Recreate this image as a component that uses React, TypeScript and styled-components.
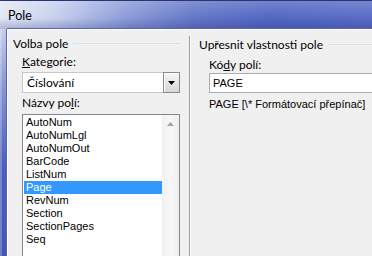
import React from 'react'
import styled, { createGlobalStyle } from 'styled-components'

const GlobalStyle = createGlobalStyle`
  html, body {
    margin: 0;
    padding: 0;
    background: #f0f0f0;
  }
`

const uiFont = `Lato, "Noto Sans", sans-serif`
const listFont = `"Liberation Sans", Arial, sans-serif`

const Window = styled.div`
  width: 372px;
  height: 256px;
  overflow: hidden;
  display: flex;
  flex-direction: column;
  background: #4f60bb;
`

const TitleBar = styled.div`
  height: 29px;
  flex: none;
  display: flex;
  align-items: center;
  padding-left: 8px;
  box-sizing: border-box;
  border-top: 1px solid #2a3470;
  background:
    linear-gradient(180deg, rgba(255, 255, 255, 0.18) 0%, rgba(255, 255, 255, 0) 60%, rgba(20, 30, 110, 0.25) 100%),
    linear-gradient(90deg, #e3e8f5 0%, #c9d3ee 14%, #8b9bd8 34%, #6477c8 52%, #5467c2 72%, #5a6cc6 100%);
  font-family: ${uiFont};
  font-size: 12.5px;
  color: #000;
`

const Frame = styled.div`
  flex: 1;
  display: flex;
  min-height: 0;
`

const Edge = styled.div`
  width: 7px;
  flex: none;
  background: linear-gradient(180deg, #c4cdec 0%, #8796d6 25%, #4d5fbc 60%, #4255b4 100%);
  box-shadow: inset 2px 0 0 rgba(255, 255, 255, 0.25);
`

const Client = styled.div`
  flex: 1;
  display: flex;
  padding-top: 6px;
  background: #f0f0f0;
  border-top: 1px solid #fdfdfd;
  border-left: 1px solid #fdfdfd;
  box-shadow: 0 -1px 0 #5a68a8, -1px 0 0 #5a68a8;
  font-family: ${uiFont};
  font-size: 12px;
  color: #000;
`

const Column = styled.div<{ $pl: number; $pr: number; $grow?: boolean }>`
  display: flex;
  flex-direction: column;
  padding-left: ${({ $pl }) => $pl}px;
  padding-right: ${({ $pr }) => $pr}px;
  ${({ $grow }) => ($grow ? 'flex: 1; min-width: 0;' : 'width: 181px; box-sizing: border-box; flex: none;')}
`

const Divider = styled.div`
  width: 1px;
  flex: none;
  background: #a0a0a0;
  border-right: 1px solid #ffffff;
`

const GroupHeader = styled.div`
  display: flex;
  align-items: center;
  gap: 5px;
  height: 16px;
  white-space: nowrap;
`

const HeaderLine = styled.div`
  flex: 1;
  height: 1px;
  background: #d5dfe5;
`

const Fields = styled.div<{ $indent: number }>`
  display: flex;
  flex-direction: column;
  padding-left: ${({ $indent }) => $indent}px;
`

const Label = styled.div<{ $mt: number }>`
  margin-top: ${({ $mt }) => $mt}px;
  height: 16px;
  line-height: 16px;
  white-space: nowrap;
`

const Key = styled.span`
  text-decoration: underline;
`

const Combo = styled.div`
  margin-top: 2px;
  height: 21px;
  display: flex;
  box-sizing: border-box;
  border: 1px solid #c8c8c8;
  background: #fff;
`

const ComboText = styled.div`
  flex: 1;
  padding-left: 4px;
  line-height: 19px;
`

const ComboButton = styled.div`
  width: 17px;
  box-sizing: border-box;
  border: 1px solid #8a8a8a;
  margin: -1px -1px -1px 0;
  background: linear-gradient(180deg, #f6f6f6 0%, #e6e6e6 50%, #d6d6d6 100%);
  box-shadow: inset 1px 1px 0 #fff;
  display: flex;
  align-items: center;
  justify-content: center;
`

const List = styled.div`
  margin-top: 3px;
  height: 160px;
  display: flex;
  box-sizing: border-box;
  border: 1px solid #828790;
  background: #fff;
`

const Items = styled.div`
  flex: 1;
  padding: 1px 0 0 1px;
  font-family: ${listFont};
  font-size: 11px;
`

const Item = styled.div<{ $selected?: boolean }>`
  height: 13px;
  line-height: 13px;
  padding-left: 2px;
  background: ${({ $selected }) => ($selected ? '#3399ff' : 'transparent')};
  color: ${({ $selected }) => ($selected ? '#fff' : '#000')};
`

const ScrollBar = styled.div`
  width: 17px;
  flex: none;
  background: linear-gradient(90deg, #f0f0f0 0%, #f7f7f7 50%, #eeeeee 100%);
  display: flex;
  flex-direction: column;
`

const ScrollArrow = styled.div`
  height: 17px;
  display: flex;
  align-items: center;
  justify-content: center;
`

const TextBox = styled.div`
  height: 20px;
  width: 220px;
  box-sizing: border-box;
  border: 1px solid #abadb3;
  background: #fff;
  padding-left: 3px;
  line-height: 18px;
  font-family: ${listFont};
  font-size: 11px;
`

const Hint = styled.div`
  margin-top: 3px;
  height: 16px;
  line-height: 16px;
  white-space: nowrap;
  font-family: ${listFont};
  font-size: 11px;
`

const fields = ['AutoNum', 'AutoNumLgl', 'AutoNumOut', 'BarCode', 'ListNum', 'Page', 'RevNum', 'Section', 'SectionPages', 'Seq']

export default function App() {
  return (
    <>
      <GlobalStyle />
      <Window>
        <TitleBar>Pole</TitleBar>
        <Frame>
          <Edge />
          <Client>
            <Column $pl={5} $pr={9}>
              <GroupHeader>
                Volba pole
                <HeaderLine />
              </GroupHeader>
              <Fields $indent={9}>
                <Label $mt={3}>
                  <Key>K</Key>ategorie:
                </Label>
                <Combo>
                  <ComboText>Číslování</ComboText>
                  <ComboButton>
                    <svg width="7" height="4" viewBox="0 0 7 4">
                      <path d="M0 0h7L3.5 4z" fill="#000" />
                    </svg>
                  </ComboButton>
                </Combo>
                <Label $mt={2}>
                  Názvy po<Key>l</Key>í:
                </Label>
                <List>
                  <Items>
                    {fields.map((f) => (
                      <Item key={f} $selected={f === 'Page'}>
                        {f}
                      </Item>
                    ))}
                  </Items>
                  <ScrollBar>
                    <ScrollArrow>
                      <svg width="7" height="4" viewBox="0 0 7 4">
                        <path d="M3.5 0L7 4H0z" fill="#a3a3a3" />
                      </svg>
                    </ScrollArrow>
                  </ScrollBar>
                </List>
              </Fields>
            </Column>
            <Divider />
            <Column $pl={8} $pr={0} $grow>
              <GroupHeader>
                Upřesnit vlastnosti pole
                <HeaderLine />
              </GroupHeader>
              <Fields $indent={10}>
                <Label $mt={5}>
                  Kó<Key>d</Key>y polí:
                </Label>
                <TextBox>PAGE</TextBox>
                <Hint>PAGE [\* Formátovací přepínač]</Hint>
              </Fields>
            </Column>
          </Client>
        </Frame>
      </Window>
    </>
  )
}
